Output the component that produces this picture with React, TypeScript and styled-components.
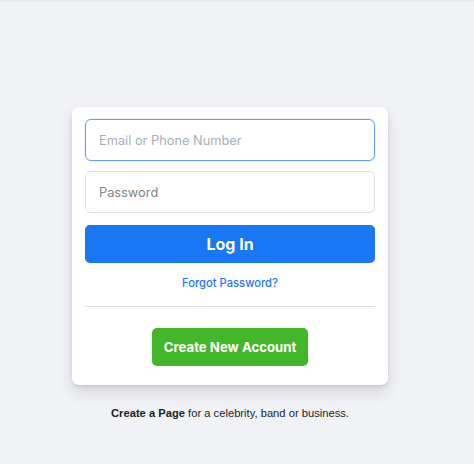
import React from 'react';
import styled, { createGlobalStyle } from 'styled-components';

const GlobalStyle = createGlobalStyle`
    html, body {
        margin:0;
        padding:0;
        background-color:#f0f2f5;
    }
    * {
        box-sizing:border-box;
    }
`;

const Page = styled.div`
    min-height:100vh;
    display:flex;
    flex-direction:column;
    align-items:center;
    padding-top:105px;
    padding-right:14px;
    border-top:2px solid #e9eaee;
`;

const Card = styled.div`
    width:316px;
    background-color:#fff;
    border-radius:7px;
    box-shadow:0 2px 4px rgba(0, 0, 0, 0.1), 0 8px 16px rgba(0, 0, 0, 0.1);
    padding:12px 13px 19px;
    display:flex;
    flex-direction:column;
    align-items:center;
    font-family:Inter, "Liberation Sans", sans-serif;
`;

const Input = styled.input<{ $focused?: boolean }>`
    width:100%;
    height:42px;
    border:1px solid ${(props) => props.$focused ? '#6a9ee9' : '#dddfe2'};
    box-shadow:${(props) => props.$focused ? '0 0 0 1px #eef4fd' : 'none'};
    border-radius:6px;
    padding:0 13px;
    font-family:inherit;
    font-size:12.8px;
    color:#1d2129;
    outline:none;
    & + & {
        margin-top:10px;
    }
    &::placeholder {
        color:${(props) => props.$focused ? '#a9aeb6' : '#7f8287'};
    }
`;

const Button = styled.button<{ $green?: boolean }>`
    height:38px;
    border:none;
    border-radius:5px;
    color:#fff;
    font-family:inherit;
    font-weight:700;
    cursor:pointer;
    background-color:${(props) => props.$green ? '#42b72a' : '#1877f2'};
    font-size:${(props) => props.$green ? '13.2px' : '16px'};
    width:${(props) => props.$green ? 'auto' : '100%'};
    padding:${(props) => props.$green ? '0 12px' : '0'};
`;

const LoginButton = styled(Button)`
    margin-top:12px;
`;

const Forgot = styled.a`
    margin-top:13px;
    font-size:11.2px;
    line-height:14px;
    font-weight:500;
    color:#1877f2;
    text-decoration:none;
`;

const Divider = styled.div`
    width:100%;
    height:1px;
    margin-top:16px;
    background-color:#dadde1;
`;

const CreateButton = styled(Button)`
    margin-top:21px;
`;

const Footer = styled.p`
    margin:22px 0 0;
    font-family:"Liberation Sans", Arial, sans-serif;
    font-size:11.2px;
    color:#1c1e21;
    b {
        font-weight:700;
    }
`;

const App = () => {
    return (
        <>
            <GlobalStyle />
            <Page>
                <Card>
                    <Input $focused type="text" placeholder="Email or Phone Number" />
                    <Input type="password" placeholder="Password" />
                    <LoginButton>Log In</LoginButton>
                    <Forgot href="#">Forgot Password?</Forgot>
                    <Divider />
                    <CreateButton $green>Create New Account</CreateButton>
                </Card>
                <Footer><b>Create a Page</b> for a celebrity, band or business.</Footer>
            </Page>
        </>
    );
};

export default App;
